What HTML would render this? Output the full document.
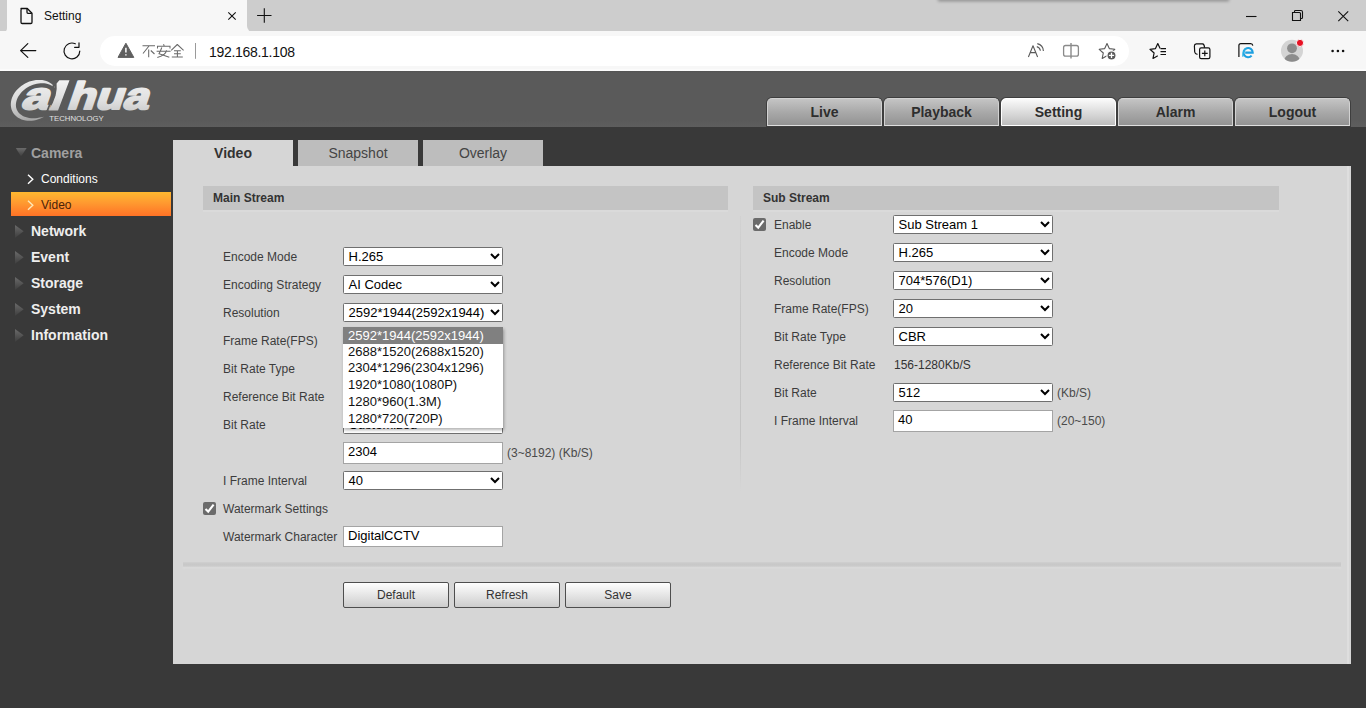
<!DOCTYPE html>
<html><head><meta charset="utf-8"><title>Setting</title>
<style>
*{margin:0;padding:0;box-sizing:border-box}
html,body{width:1366px;height:708px;overflow:hidden;background:#393939;font-family:"Liberation Sans",sans-serif;position:relative}
div,span,svg{position:absolute}
.t{white-space:nowrap;line-height:16px}
/* browser chrome */
#tabstrip{left:0;top:0;width:1366px;height:31px;background:#f7f7f7}
.tsg{top:0;height:31.5px;background:#cdcdcd}
#tab{left:7px;top:0;width:240px;height:31px;background:#f7f7f7;border-radius:2px 2px 0 0}
#toolbar{left:0;top:31px;width:1366px;height:40px;background:#f7f7f7}
#pill{left:100px;top:36px;width:1029px;height:30px;border-radius:15px;background:#fff}
/* page */
#header{left:0;top:71px;width:1366px;height:56px;background:linear-gradient(#535353,#5a5a5a 2px,#5a5a5a 88%,#5e5e5e)}
.htab{top:98px;width:115px;height:28px;border-radius:5px 5px 0 0;border:1px solid #d2d2d2;border-bottom-color:#dedede;box-shadow:0 0 0 1px #3e3e3e;background:linear-gradient(#c4c4c4,#a9a9a9 50%,#939393);font-weight:bold;font-size:14px;color:#2e2e2e;text-align:center;line-height:26px}
.htab.on{border-color:#fff;background:linear-gradient(#fbfbfb,#d9d9d9 55%,#bdbdbd)}
.nav{font-weight:bold;font-size:14px;color:#eee;left:31px}
.tri{left:16px;width:0;height:0;border-top:5px solid transparent;border-bottom:5px solid transparent;border-left:8px solid #5e5e5e}
#panel{left:173px;top:166px;width:1178px;height:498px;background:#d6d6d6}
.stab{top:140px;width:120px;height:26px;background:#bdbdbd;font-size:14px;color:#444;text-align:center;line-height:26px}
.stab.on{background:#d6d6d6;color:#333;font-weight:bold}
.sec{height:24px;background:#c4c4c4;box-shadow:0 2px 0 #dadada;font-weight:bold;font-size:12px;color:#333;line-height:24px;padding-left:10px}
.lab{font-size:12px;color:#3c3c3c}
.sel{width:160px;height:19px;background:#fff;border:1px solid #6f6f6f;border-radius:1.5px;font-size:13px;color:#000;line-height:16px;padding-left:4.5px;padding-top:0.6px;white-space:nowrap}
.sel svg{right:2px;top:5px}
.inp{width:160px;height:22px;padding-top:1px;background:#fff;border:1px solid #a4a4a4;font-size:13px;color:#000;line-height:16px;padding-left:4px;white-space:nowrap}
.unit{font-size:12px;color:#4a4a4a}
.btn{top:582px;width:106px;height:26px;border:1px solid #4e4e4e;border-radius:2px;background:linear-gradient(#fefefe,#e8e8e8 45%,#cdcdcd);font-size:12px;color:#333;text-align:center;line-height:24px}
.chk{width:13px;height:13px;background:#6b6b6b;border-radius:2px}
.chk svg{left:0;top:0}
</style></head><body>
<!-- Browser tab strip -->
<div id="tabstrip"></div>
<div class="tsg" style="left:0;width:7px;border-radius:0 0 4px 0"></div>
<div class="tsg" style="left:247px;width:1119px;border-radius:0 0 0 6px"></div>
<div style="left:939px;top:-10px;width:289px;height:10px;background:#9c9c9c;box-shadow:0 0.5px 3px 1px rgba(0,0,0,.28)"></div>
<div id="toolbar"></div>
<div id="pill"></div>
<div style="left:0;top:69px;width:1366px;height:2px;background:linear-gradient(#fafafa,#fdfdfd)"></div>
<svg style="left:0;top:0" width="1366" height="71" viewBox="0 0 1366 71">
 <g fill="none" stroke="#111" stroke-width="1.3" stroke-linejoin="round">
  <path d="M21 8.5H27.3L32 13.2V22.3Q32 23.5 30.8 23.5H22.2Q21 23.5 21 22.3V9.7Q21 8.5 22.2 8.5Z"/>
  <path d="M27 8.7V12.3Q27 13.3 28 13.3H31.8"/>
 </g>
 <g stroke="#111" stroke-width="1.1" fill="none">
  <path d="M228.3 12.3L235.7 19.7M235.7 12.3L228.3 19.7"/>
  <path d="M264.3 8.3V22.7M257.1 15.5H271.5"/>
  <path d="M1246 16.5H1256.5"/>
  <path d="M1292.5 12.5H1299.5Q1300.5 12.5 1300.5 13.5V20.5H1292.5Z" />
  <path d="M1294.5 12V11.3Q1294.5 10.5 1295.5 10.5H1301Q1302.5 10.5 1302.5 12V17.5Q1302.5 18.5 1301.5 18.5H1301" />
  <path d="M1338.3 11.3L1348.2 21.2M1348.2 11.3L1338.3 21.2"/>
 </g>
 <g stroke="#111" stroke-width="1.2" fill="none" stroke-linecap="round" stroke-linejoin="round">
  <path d="M27.8 43.6L20.6 50.6L27.8 57.4M20.8 50.6H35.8"/>
  <path d="M79.8 51A7.9 7.9 0 1 1 75.3 43.8"/>
  <path d="M74.6 47.3H79V42.9"/>
 </g>
 <path d="M125.9 43.2L133.8 57.4H118Z" fill="#5f5f5f" stroke="#5f5f5f" stroke-width="1" stroke-linejoin="round"/>
 <path d="M125.9 47.8V52.6M125.9 54.3V55.5" stroke="#fff" stroke-width="1.5"/>
 <g stroke="#6a6a6a" stroke-width="1.05" fill="none">
  <path d="M142.5 45.8H155M149 46L143 53.5M148.7 49.5V57.3M150.8 50.5L154.5 54"/>
  <path d="M163.5 44.3L164.2 45.8M157.5 48.6V46.3H170V48.6M156.6 51.3H170.6M161.8 47.5Q160.5 51 159 53.8Q164 55.5 169.3 57.3M166.5 50.2Q166 55 157.3 57.5"/>
  <path d="M177.3 44.5L171.2 50.3M177.3 44.5L183.6 50.3M174 50.8H180.8M174 53.7H180.8M171.8 57H182.8M177.4 51V57"/>
 </g>
 <path d="M195.5 43V58.8" stroke="#9a9a9a" stroke-width="1"/>
 <g fill="none" stroke="#5a5a5a" stroke-width="1.1" stroke-linejoin="round">
  <path d="M1028.4 57L1033 45.8L1037.6 57M1030.2 52.6H1035.8"/>
  <path d="M1036.8 46.6A5 5 0 0 1 1040.4 50.8"/>
  <path d="M1037.3 43.6A8 8 0 0 1 1043.4 51"/>
 </g>
 <g fill="none" stroke="#8a8a8a" stroke-width="1.1">
  <path d="M1065.6 45.5H1076.4Q1078.4 45.5 1078.4 47.5V54.2Q1078.4 56.2 1076.4 56.2H1065.6Q1063.6 56.2 1063.6 54.2V47.5Q1063.6 45.5 1065.6 45.5Z" stroke-width="1.3"/>
  <path d="M1071 43V58.5" stroke-width="1.4"/>
 </g>
 <path d="M1107.0 43.6L1109.3 48.6L1114.8 49.3L1110.7 53.0L1111.8 58.4L1107.0 55.7L1102.2 58.4L1103.3 53.0L1099.2 49.3L1104.7 48.6Z" fill="none" stroke="#5a5a5a" stroke-width="1.1" stroke-linejoin="round"/>
 <circle cx="1111.5" cy="55.4" r="4.6" fill="#5a5a5a" stroke="#fff" stroke-width="1.2"/>
 <path d="M1111.5 52.8V58M1108.9 55.4H1114.1" stroke="#fff" stroke-width="1.3"/>
 <g fill="none" stroke="#111" stroke-width="1.2" stroke-linejoin="round">
  <path d="M1160.1 48.6L1157.8 43.6L1155.5 48.6L1150.0 49.3L1154.1 53.0L1153.0 58.4L1157.8 55.7"/>
  <path d="M1160.5 48.6H1166M1160.5 51.6H1166M1160.5 54.5H1166"/>
  <path d="M1197.5 54.3Q1195 54 1194.7 52L1194.4 46Q1194.4 44 1196.3 43.8L1202.6 43.8Q1204.3 44 1204.6 47.7"/>
  <path d="M1201.2 47.9H1208.3Q1209.9 47.9 1209.9 49.5V57.1Q1209.9 58.7 1208.3 58.7H1201.2Q1199.6 58.7 1199.6 57.1V49.5Q1199.6 47.9 1201.2 47.9Z"/>
  <path d="M1204.8 50.4V56.2M1201.9 53.3H1207.7"/>
  <path d="M1238.9 57.1V45.6Q1238.9 43.6 1240.9 43.6H1250.6Q1252.6 43.6 1252.8 45.6"/>
 </g>
 <path d="M1245.2 52.6H1252.7A4.6 4.6 0 1 0 1251.6 55.6" fill="none" stroke="#1d9fe0" stroke-width="2.1"/><path d="M1242.8 56.8Q1242.6 51 1246.3 48.3" fill="none" stroke="#27b3e8" stroke-width="1.2"/>
 <circle cx="1292" cy="50.8" r="11" fill="#d4d4d4"/>
 <circle cx="1292" cy="48.3" r="4.9" fill="#8c8c8c"/>
 <clipPath id="pc"><circle cx="1292" cy="50.8" r="11"/></clipPath>
 <ellipse cx="1292" cy="60.5" rx="7.8" ry="6.5" fill="#8c8c8c" clip-path="url(#pc)"/>
 <circle cx="1300" cy="42.9" r="3.6" fill="#e81123" stroke="#f7f7f7" stroke-width="1"/>
 <circle cx="1332.6" cy="51" r="1.3" fill="#111"/><circle cx="1337.9" cy="51" r="1.3" fill="#111"/><circle cx="1343.1" cy="51" r="1.3" fill="#111"/>
</svg>
<div class="t" style="left:44px;top:8px;font-size:12px;color:#111">Setting</div>
<div class="t" style="left:209px;top:44px;font-size:14px;color:#111;letter-spacing:-0.3px">192.168.1.108</div>

<!-- Page header -->
<div id="header"></div>
<svg style="left:0;top:71px" width="170" height="56" viewBox="0 71 170 56">
 <defs>
  <linearGradient id="lg" x1="0" y1="0" x2="0" y2="1">
   <stop offset="0" stop-color="#f4f4f4"/><stop offset="0.6" stop-color="#e0e0e0"/><stop offset="1" stop-color="#c4c4c4"/>
  </linearGradient>
  <linearGradient id="lg2" x1="0" y1="0" x2="0.3" y2="1">
   <stop offset="0" stop-color="#f2f2f2"/><stop offset="0.5" stop-color="#d8d8d8"/><stop offset="1" stop-color="#a8a8a8"/>
  </linearGradient>
 </defs>
 <path d="M55.18 87.69 L54.11 86.23 L52.85 84.90 L51.43 83.71 L49.86 82.66 L48.15 81.77 L46.32 81.04 L44.38 80.48 L42.35 80.10 L40.25 79.90 L38.09 79.89 L35.90 80.05 L33.69 80.39 L31.49 80.91 L29.32 81.60 L27.18 82.46 L25.11 83.47 L23.12 84.64 L21.23 85.94 L19.45 87.38 L17.81 88.92 L16.31 90.57 L14.97 92.31 L13.80 94.11 L12.81 95.97 L12.01 97.87 L11.41 99.79 L11.01 101.72 L10.81 103.63 L10.83 105.52 L11.05 107.36 L11.47 109.13 L12.10 110.83 L12.93 112.44 L13.94 113.93 L15.13 115.31 L16.50 116.56 L18.02 117.66 L19.68 118.60 L21.47 119.39 L23.38 120.00 L25.38 120.44 L27.46 120.71 L29.60 120.79 L31.78 120.69 L33.98 120.41 L36.19 119.95 L38.37 119.32 L40.52 118.52 L42.62 117.56 L44.14 116.73 L44.14 116.73 L41.78 117.13 L39.54 117.60 L37.35 117.95 L35.20 118.16 L33.10 118.23 L31.06 118.14 L29.11 117.92 L27.26 117.55 L25.52 117.04 L23.91 116.42 L22.45 115.68 L21.14 114.85 L19.98 113.94 L18.98 112.97 L18.13 111.94 L17.42 110.86 L16.86 109.75 L16.43 108.59 L16.13 107.40 L15.95 106.16 L15.89 104.87 L15.97 103.54 L16.18 102.16 L16.53 100.74 L17.03 99.30 L17.67 97.84 L18.47 96.37 L19.41 94.92 L20.49 93.49 L21.71 92.11 L23.05 90.78 L24.51 89.53 L26.07 88.36 L27.72 87.29 L29.45 86.33 L31.24 85.49 L33.07 84.77 L34.93 84.18 L36.80 83.73 L38.68 83.41 L40.54 83.24 L42.37 83.21 L44.17 83.32 L45.92 83.57 L47.62 83.96 L49.27 84.50 L50.86 85.18 L52.40 86.01 L53.91 86.97Z" fill="url(#lg2)"/>
 <g transform="translate(38 0) skewX(-19)" fill="url(#lg)" stroke="url(#lg)" stroke-width="2.2" stroke-linejoin="round" font-family="Liberation Sans" font-weight="bold" font-size="38">
  <text x="20" y="109.4" textLength="27.5" lengthAdjust="spacingAndGlyphs">a</text>
  <text x="65.5" y="109.4" textLength="81" lengthAdjust="spacingAndGlyphs">hua</text>
 </g>
 <path d="M59.4 80.2H69.5L58 110.4H48.4Q53.6 103 55.6 95.5Q57.3 89 56.6 83.5Z" fill="url(#lg)"/>
 <path d="M53.6 85Q52.6 99 47.2 111" fill="none" stroke="#5a5a5a" stroke-width="1.8"/>
 <text x="49.3" y="121.2" font-family="Liberation Sans" font-size="8" fill="#e0e0e0" textLength="54.4" lengthAdjust="spacingAndGlyphs">TECHNOLOGY</text>
</svg>
<div class="htab" style="left:767px">Live</div>
<div class="htab" style="left:884px">Playback</div>
<div class="htab on" style="left:1001px">Setting</div>
<div class="htab" style="left:1118px">Alarm</div>
<div class="htab" style="left:1235px">Logout</div>

<!-- sidebar -->
<svg style="left:14px;top:146px" width="15" height="12" viewBox="0 0 15 12"><defs><linearGradient id="tg" x1="0" y1="0" x2="0" y2="1"><stop offset="0" stop-color="#6a6a6a"/><stop offset="1" stop-color="#3e3e3e"/></linearGradient></defs><path d="M1.8 2.1H12.7L7 10.4Z" fill="url(#tg)"/></svg>
<div class="t nav" style="top:145px;color:#a0a0a0">Camera</div>
<svg style="left:26px;top:173px" width="10" height="12" viewBox="0 0 10 12"><path d="M2 1.8L6.8 6.3L2 10.8" stroke="#fff" stroke-width="1.4" fill="none"/></svg>
<div class="t" style="left:41px;top:171px;font-size:12px;color:#fff">Conditions</div>
<div style="left:11px;top:192px;width:160px;height:24px;background:linear-gradient(#ffb830,#ff9a30 45%,#ff7226)"></div>
<svg style="left:26px;top:199px" width="10" height="12" viewBox="0 0 10 12"><path d="M2 1.8L6.8 6.3L2 10.8" stroke="#ffe9b8" stroke-width="1.4" fill="none"/></svg>
<div class="t" style="left:41px;top:197px;font-size:12px;color:#4a2208">Video</div>
<svg style="left:14px;top:224px" width="11" height="15" viewBox="0 0 11 15"><path d="M1 1V14L9.6 7.2Z" fill="url(#tg)"/></svg><div class="t nav" style="top:223px">Network</div>
<svg style="left:14px;top:250px" width="11" height="15" viewBox="0 0 11 15"><path d="M1 1V14L9.6 7.2Z" fill="url(#tg)"/></svg><div class="t nav" style="top:249px">Event</div>
<svg style="left:14px;top:276px" width="11" height="15" viewBox="0 0 11 15"><path d="M1 1V14L9.6 7.2Z" fill="url(#tg)"/></svg><div class="t nav" style="top:275px">Storage</div>
<svg style="left:14px;top:302px" width="11" height="15" viewBox="0 0 11 15"><path d="M1 1V14L9.6 7.2Z" fill="url(#tg)"/></svg><div class="t nav" style="top:301px">System</div>
<svg style="left:14px;top:328px" width="11" height="15" viewBox="0 0 11 15"><path d="M1 1V14L9.6 7.2Z" fill="url(#tg)"/></svg><div class="t nav" style="top:327px">Information</div>

<!-- content -->
<div style="left:173px;top:140px;width:120px;height:26px;background:#d6d6d6"></div>
<div class="stab on" style="left:173px">Video</div>
<div class="stab" style="left:298px">Snapshot</div>
<div class="stab" style="left:423px">Overlay</div>
<div id="panel"></div>

<div class="sec" style="left:203px;top:186px;width:525px">Main Stream</div>
<div class="sec" style="left:753px;top:186px;width:526px">Sub Stream</div>
<div style="left:740px;top:216px;width:1px;height:275px;background:linear-gradient(#d2d2d2,#c6c6c6 35%,#c4c4c4 80%,#d6d6d6)"></div>

<!-- main stream -->
<div class="t lab" style="left:223px;top:249px">Encode Mode</div>
<div class="t lab" style="left:223px;top:277px">Encoding Strategy</div>
<div class="t lab" style="left:223px;top:305px">Resolution</div>
<div class="t lab" style="left:223px;top:333px">Frame Rate(FPS)</div>
<div class="t lab" style="left:223px;top:361px">Bit Rate Type</div>
<div class="t lab" style="left:223px;top:389px">Reference Bit Rate</div>
<div class="t lab" style="left:223px;top:417px">Bit Rate</div>
<div class="t lab" style="left:223px;top:473px">I Frame Interval</div>
<div class="t lab" style="left:223px;top:501px">Watermark Settings</div>
<div class="t lab" style="left:223px;top:529px">Watermark Character</div>

<div class="sel" style="left:343px;top:247px">H.265<svg width="10" height="7" viewBox="0 0 10 7"><path d="M1 1L5 5L9 1" stroke="#000" stroke-width="2" fill="none"/></svg></div>
<div class="sel" style="left:343px;top:275px">AI Codec<svg width="10" height="7" viewBox="0 0 10 7"><path d="M1 1L5 5L9 1" stroke="#000" stroke-width="2" fill="none"/></svg></div>
<div class="sel" style="left:343px;top:303px">2592*1944(2592x1944)<svg width="10" height="7" viewBox="0 0 10 7"><path d="M1 1L5 5L9 1" stroke="#000" stroke-width="2" fill="none"/></svg></div>
<div class="sel" style="left:343px;top:415px">Customized<svg width="10" height="7" viewBox="0 0 10 7"><path d="M1 1L5 5L9 1" stroke="#000" stroke-width="2" fill="none"/></svg></div>
<div class="inp" style="left:343px;top:442px">2304</div>
<div class="t unit" style="left:507px;top:445px">(3~8192) (Kb/S)</div>
<div class="sel" style="left:343px;top:471px">40<svg width="10" height="7" viewBox="0 0 10 7"><path d="M1 1L5 5L9 1" stroke="#000" stroke-width="2" fill="none"/></svg></div>
<div class="chk" style="left:203px;top:502px"><svg width="13" height="13" viewBox="0 0 13 13"><path d="M2.5 7L5.2 9.6L10.6 2.6" stroke="#fff" stroke-width="2.1" fill="none"/></svg></div>
<div class="inp" style="left:343px;top:526px;height:21px">DigitalCCTV</div>

<!-- dropdown -->
<div style="left:343px;top:327px;width:160px;height:101px;background:#fff;box-shadow:1px 2px 3px rgba(0,0,0,.3);font-size:13px;color:#111">
<div style="left:0;top:0;width:160px;height:16.5px;background:#808080"></div>
<div class="t" style="left:5px;top:0.5px;color:#fff;line-height:16px">2592*1944(2592x1944)</div>
<div class="t" style="left:5px;top:16.7px;line-height:16px">2688*1520(2688x1520)</div>
<div class="t" style="left:5px;top:33.4px;line-height:16px">2304*1296(2304x1296)</div>
<div class="t" style="left:5px;top:50.1px;line-height:16px">1920*1080(1080P)</div>
<div class="t" style="left:5px;top:66.8px;line-height:16px">1280*960(1.3M)</div>
<div class="t" style="left:5px;top:83.5px;line-height:16px">1280*720(720P)</div>
</div>

<!-- sub stream -->
<div class="chk" style="left:753px;top:218px"><svg width="13" height="13" viewBox="0 0 13 13"><path d="M2.5 7L5.2 9.6L10.6 2.6" stroke="#fff" stroke-width="2.1" fill="none"/></svg></div>
<div class="t lab" style="left:774px;top:217px">Enable</div>
<div class="t lab" style="left:774px;top:245px">Encode Mode</div>
<div class="t lab" style="left:774px;top:273px">Resolution</div>
<div class="t lab" style="left:774px;top:301px">Frame Rate(FPS)</div>
<div class="t lab" style="left:774px;top:329px">Bit Rate Type</div>
<div class="t lab" style="left:774px;top:357px">Reference Bit Rate</div>
<div class="t lab" style="left:774px;top:385px">Bit Rate</div>
<div class="t lab" style="left:774px;top:413px">I Frame Interval</div>
<div class="sel" style="left:893px;top:215px">Sub Stream 1<svg width="10" height="7" viewBox="0 0 10 7"><path d="M1 1L5 5L9 1" stroke="#000" stroke-width="2" fill="none"/></svg></div>
<div class="sel" style="left:893px;top:243px">H.265<svg width="10" height="7" viewBox="0 0 10 7"><path d="M1 1L5 5L9 1" stroke="#000" stroke-width="2" fill="none"/></svg></div>
<div class="sel" style="left:893px;top:271px">704*576(D1)<svg width="10" height="7" viewBox="0 0 10 7"><path d="M1 1L5 5L9 1" stroke="#000" stroke-width="2" fill="none"/></svg></div>
<div class="sel" style="left:893px;top:299px">20<svg width="10" height="7" viewBox="0 0 10 7"><path d="M1 1L5 5L9 1" stroke="#000" stroke-width="2" fill="none"/></svg></div>
<div class="sel" style="left:893px;top:327px">CBR<svg width="10" height="7" viewBox="0 0 10 7"><path d="M1 1L5 5L9 1" stroke="#000" stroke-width="2" fill="none"/></svg></div>
<div class="t lab" style="left:894px;top:357px;color:#333">156-1280Kb/S</div>
<div class="sel" style="left:893px;top:383px">512<svg width="10" height="7" viewBox="0 0 10 7"><path d="M1 1L5 5L9 1" stroke="#000" stroke-width="2" fill="none"/></svg></div>
<div class="t unit" style="left:1057px;top:385px">(Kb/S)</div>
<div class="inp" style="left:893px;top:410px">40</div>
<div class="t unit" style="left:1057px;top:413px">(20~150)</div>

<!-- separator + buttons -->
<div style="left:183px;top:562px;width:1158px;height:5px;background:linear-gradient(#d0d0d0,#c8c8c8 40%,#cacaca 70%,#d2d2d2);box-shadow:0 2px 2px #dadada"></div>
<div style="left:1347px;top:166px;width:2px;height:498px;background:#dedede"></div>
<div class="btn" style="left:343px">Default</div>
<div class="btn" style="left:454px">Refresh</div>
<div class="btn" style="left:565px">Save</div>
</body></html>
